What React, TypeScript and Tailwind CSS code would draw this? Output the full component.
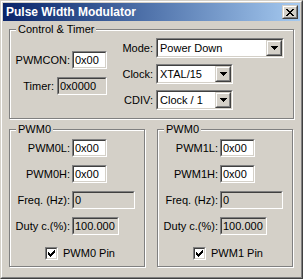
import type { ReactNode } from 'react';

// classic win2000 sunken field (edit / combo / checkbox frame)
function Sunken({ className, inner, children }: { className: string; inner: string; children?: ReactNode }) {
  return (
    <div className={`border border-t-[#808080] border-l-[#808080] border-b-white border-r-white ${className}`}>
      <div className={`h-full border border-t-[#404040] border-l-[#404040] border-b-[#d4d0c8] border-r-[#d4d0c8] ${inner}`}>
        {children}
      </div>
    </div>
  );
}

function Raised({ className, children }: { className: string; children?: ReactNode }) {
  return (
    <div className={`border border-t-[#d4d0c8] border-l-[#d4d0c8] border-b-[#404040] border-r-[#404040] ${className}`}>
      <div className="flex h-full items-center justify-center border border-t-white border-l-white border-b-[#808080] border-r-[#808080] bg-[#d4d0c8]">
        {children}
      </div>
    </div>
  );
}

function Edit({ value, w, gray }: { value: string; w: string; gray?: boolean }) {
  return (
    <Sunken className={`h-[18px] ${w}`} inner={`${gray ? 'bg-[#d4d0c8]' : 'bg-white'} pl-[1px] leading-[14px]`}>
      {value}
    </Sunken>
  );
}

function Combo({ value, w }: { value: string; w: string }) {
  return (
    <Sunken className={`h-[20px] ${w}`} inner="flex bg-white">
      <span className="flex-1 pl-[2px] leading-[16px]">{value}</span>
      <Raised className="h-[16px] w-[16px]">
        <svg width="7" height="4" viewBox="0 0 7 4" shapeRendering="crispEdges">
          <path d="M0 0h7v1H0zM1 1h5v1H1zM2 2h3v1H2zM3 3h1v1H3z" fill="#000" />
        </svg>
      </Raised>
    </Sunken>
  );
}

function Check({ label }: { label: string }) {
  const rows = [[6, 1], [5, 2], [0, 1, 4, 3], [0, 2, 3, 3], [0, 5], [1, 3], [2, 1]];
  return (
    <div className="flex items-center gap-[5px]">
      <Sunken className="h-[13px] w-[13px]" inner="flex items-center justify-center bg-white">
        <svg width="7" height="7" viewBox="0 0 7 7" shapeRendering="crispEdges">
          {rows.map((r, y) =>
            [0, 2].filter((i) => r[i + 1] !== undefined).map((i) => (
              <rect key={`${y}-${i}`} x={r[i]} y={y} width={r[i + 1]} height={1} fill="#000" />
            ))
          )}
        </svg>
      </Sunken>
      <span className="leading-[13px]">{label}</span>
    </div>
  );
}

function Group({ label, className, children }: { label: string; className: string; children: ReactNode }) {
  return (
    <div className={`relative border border-[#808080] shadow-[1px_1px_0_#fff,inset_1px_1px_0_#fff] ${className}`}>
      <span className="absolute left-[6px] top-[-7px] bg-[#d4d0c8] px-[2px] leading-[13px]">{label}</span>
      {children}
    </div>
  );
}

function PwmGroup({ n }: { n: number }) {
  return (
    <Group label="PWM0" className="h-[138px] w-[136px]">
      <div className="grid grid-cols-[60px_auto] items-center gap-x-[2px] gap-y-[8px] pt-[9px]">
        <span className="text-right">PWM{n}L:</span>
        <Edit value="0x00" w="w-[35px]" />
        <span className="text-right">PWM{n}H:</span>
        <Edit value="0x00" w="w-[35px]" />
        <span className="text-right">Freq. (Hz):</span>
        <Edit value="0" w="w-[63px]" gray />
        <span className="text-right">Duty c.(%):</span>
        <Edit value="100.000" w="w-[47px]" gray />
      </div>
      <div className="mt-[12px] pl-[35px]">
        <Check label={`PWM${n} Pin`} />
      </div>
    </Group>
  );
}

export default function App() {
  const x = [[0, 2, 6, 2], [1, 2, 5, 2], [2, 4], [3, 2], [2, 4], [1, 2, 5, 2], [0, 2, 6, 2]];
  return (
    <div className="h-[279px] w-[303px] border border-t-[#d4d0c8] border-l-[#d4d0c8] border-b-[#404040] border-r-[#404040] bg-[#d4d0c8] font-['Liberation_Sans',Arial,sans-serif] text-[11px] text-black">
      <div className="h-full border border-t-white border-l-white border-b-[#808080] border-r-[#808080] p-px">
        <div className="flex h-[18px] items-center justify-between bg-gradient-to-r from-[#0a246a] to-[#a6caf0] pl-[3px] pr-[2px]">
          <span className="text-[12px] font-bold text-white">Pulse Width Modulator</span>
          <Raised className="h-[14px] w-[16px]">
            <svg width="8" height="7" viewBox="0 0 8 7" shapeRendering="crispEdges">
              {x.map((r, y) =>
                [0, 2].filter((i) => r[i + 1] !== undefined).map((i) => (
                  <rect key={`${y}-${i}`} x={r[i]} y={y} width={r[i + 1]} height={1} fill="#000" />
                ))
              )}
            </svg>
          </Raised>
        </div>

        <div className="px-[6px] pt-[8px]">
          <Group label="Control & Timer" className="flex h-[90px] w-[285px]">
            <div className="flex w-[97px] flex-col items-end gap-[8px] pt-[21px]">
              <div className="flex items-center gap-[2px]">
                <span>PWMCON:</span>
                <Edit value="0x00" w="w-[35px]" />
              </div>
              <div className="flex items-center gap-[3px]">
                <span>Timer:</span>
                <Edit value="0x0000" w="w-[50px]" gray />
              </div>
            </div>
            <div className="grid grid-cols-[46px_auto] items-center gap-x-[3px] gap-y-[6px] self-start pt-[8px]">
              <span className="text-right">Mode:</span>
              <Combo value="Power Down" w="w-[128px]" />
              <span className="text-right">Clock:</span>
              <Combo value="XTAL/15" w="w-[77px]" />
              <span className="text-right">CDIV:</span>
              <Combo value="Clock / 1" w="w-[77px]" />
            </div>
          </Group>

          <div className="mt-[10px] flex gap-[12px]">
            <PwmGroup n={0} />
            <PwmGroup n={1} />
          </div>
        </div>
      </div>
    </div>
  );
}
